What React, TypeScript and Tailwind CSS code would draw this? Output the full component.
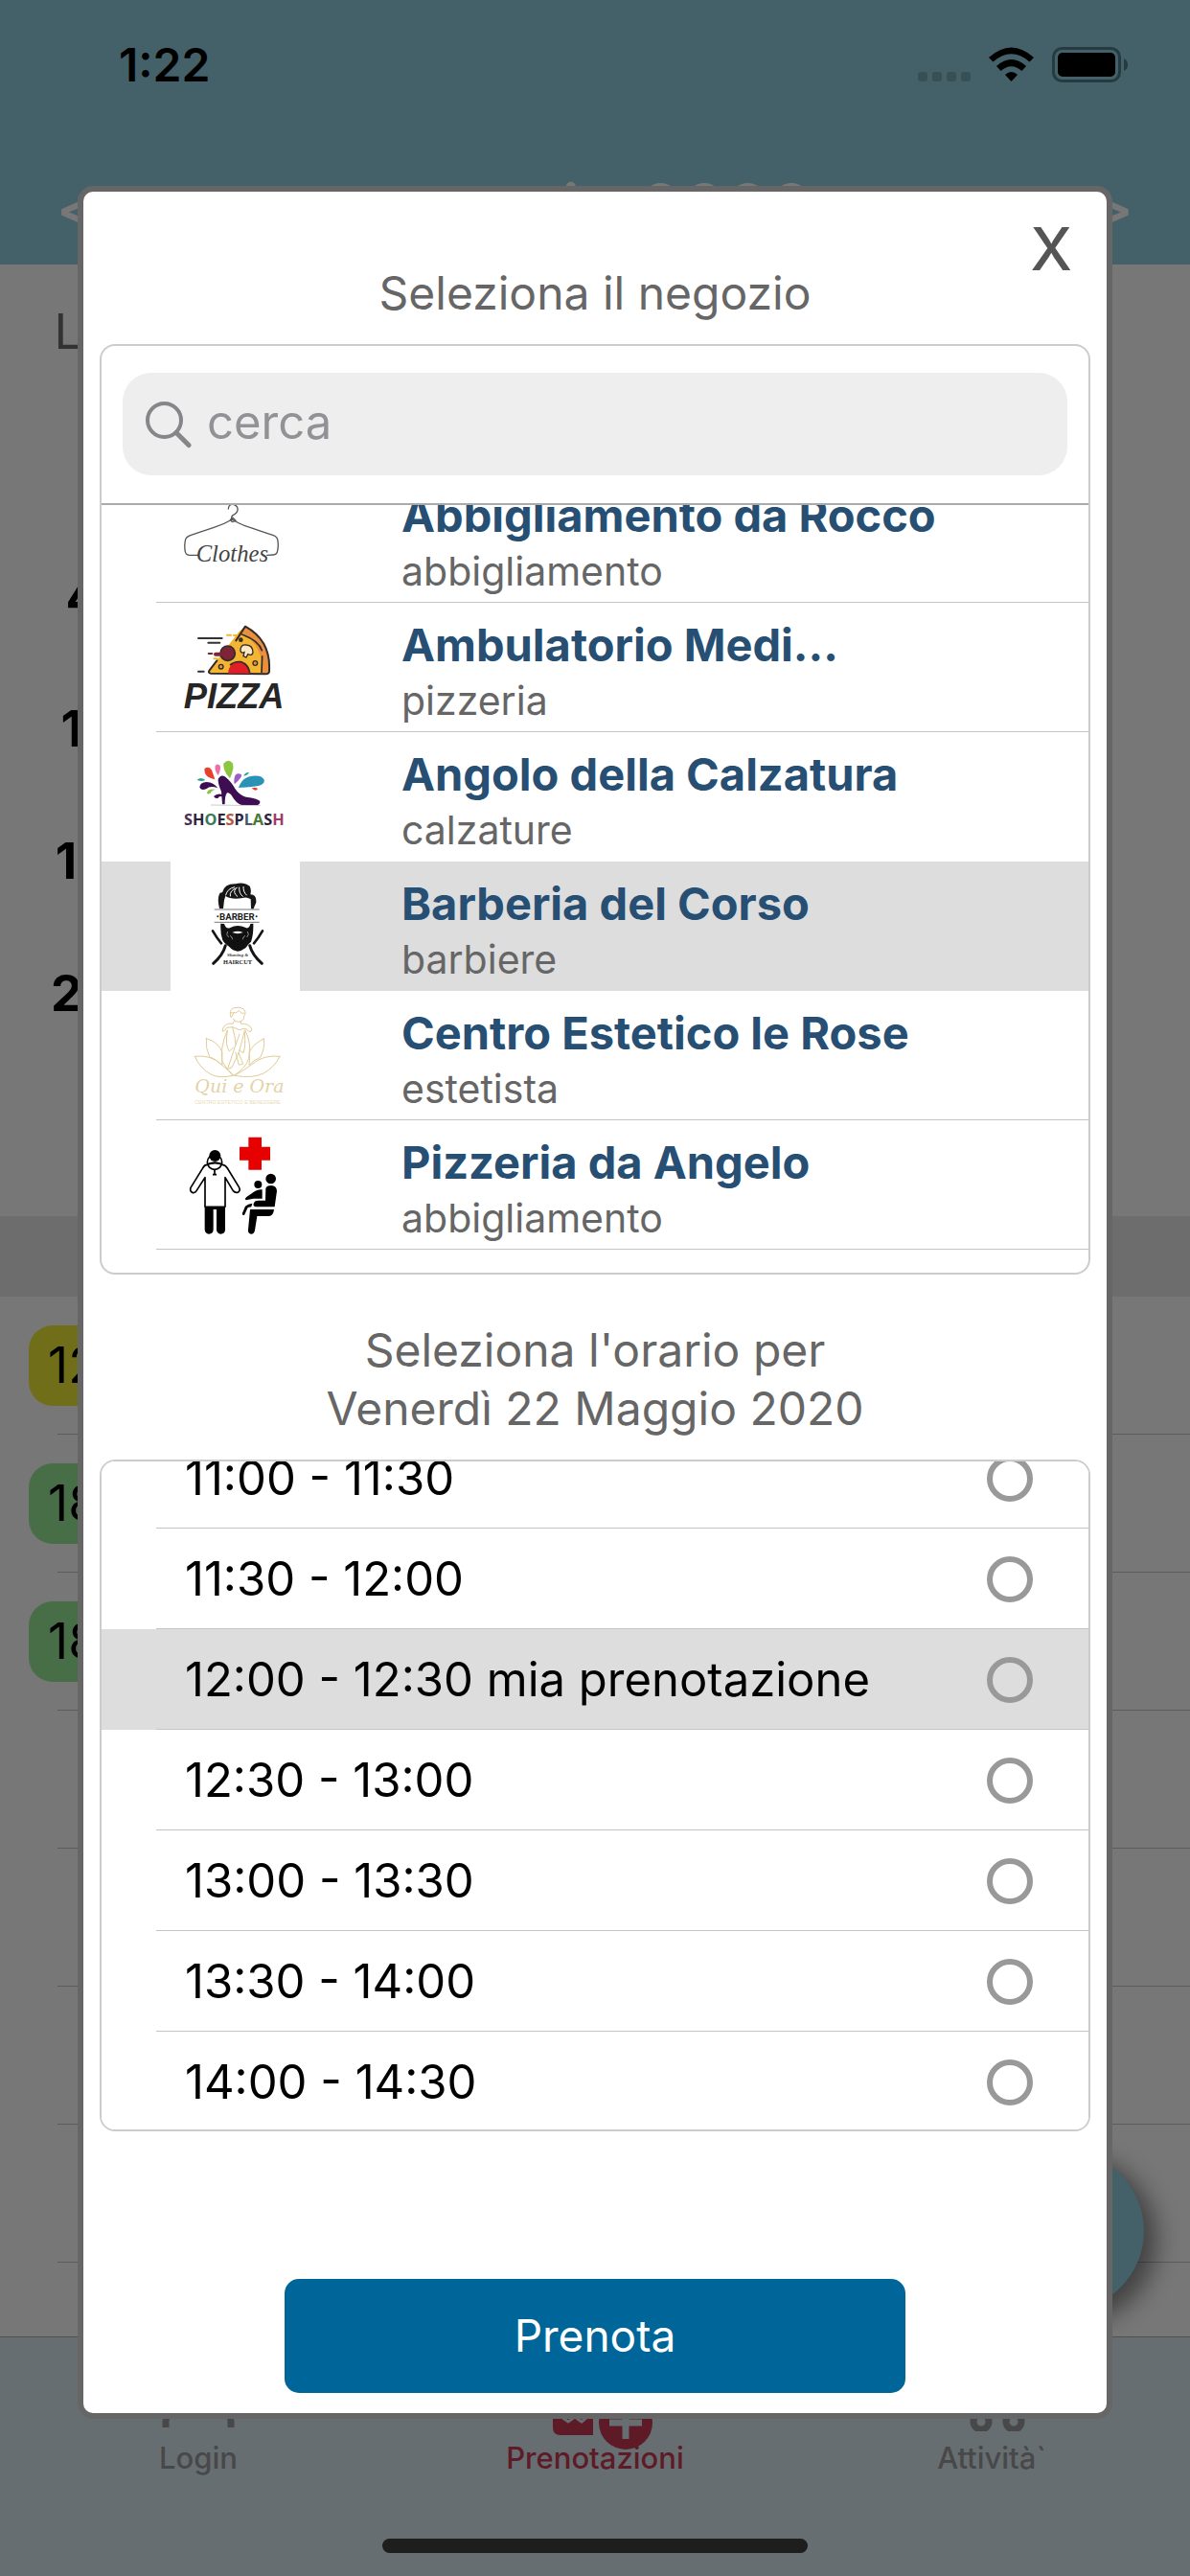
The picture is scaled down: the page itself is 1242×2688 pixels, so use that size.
import { useLayoutEffect, useRef, useState } from "react";
import type { ReactNode } from "react";

function StatusIcons() {
  return (
    <svg viewBox="0 0 220 40" className="h-10 w-[220px]" aria-hidden="true">
      <g fill="#384f56">
        <rect x="0" y="27" width="10" height="10" rx="3" />
        <rect x="15" y="27" width="10" height="10" rx="3" />
        <rect x="30" y="27" width="10" height="10" rx="3" />
        <rect x="45" y="27" width="10" height="10" rx="3" />
      </g>
      <path d="M74 12Q97.500 -9 121 12L116.500 16.500Q97.500 0 78.500 16.500Z" fill="#000" />
      <path d="M82 21Q97.500 7 113 21L108.500 26Q97.500 16.500 86.500 26Z" fill="#000" />
      <path d="M91 30Q97.500 24 104 30L97.500 37Z" fill="#000" />
      <rect x="141.500" y="2.500" width="69" height="34" rx="9" fill="none" stroke="#263a41" strokeWidth="3" />
      <rect x="146" y="7" width="60" height="25" rx="5" fill="#000" />
      <path d="M215 13Q219 15 219 19.500T215 26Z" fill="#263a41" />
    </svg>
  );
}

function ClothesLogo() {
  return (
    <svg viewBox="54 -18 405 405" className="h-full w-full" aria-hidden="true">
      <g fill="none" stroke="#555" strokeWidth="4" strokeLinecap="round" strokeLinejoin="round">
        <path d="M235 93Q236 78 250 79Q266 83 264 97Q262 107 250 112Q242 117 247 126" />
        <path d="M247 126Q220 142 190 151Q150 164 116 176Q102 181 100 192Q97 207 99 222Q100 237 113 238L140 238" />
        <path d="M247 126Q275 144 305 152Q345 166 376 176Q389 180 390 194Q392 210 389 224Q387 237 375 237L356 238" />
        <path d="M241 127L249 121L258 130L247 134Z" />
      </g>
      <text x="134" y="257" fontSize="74" fontStyle="italic" fontFamily="'Liberation Serif', serif" fill="#444">
        Clothes
      </text>
    </svg>
  );
}

function PizzaLogo() {
  return (
    <svg viewBox="54 387 405 405" className="h-full w-full" aria-hidden="true">
      <path d="M288 461Q366 505 364 606Q360 611 348 610L176 608Q170 604 176 596L268 478Z" fill="#f2b632" />
      <path d="M288 461Q366 505 364 606Q358 611 342 609Q346 520 274 480Z" fill="#e98f3e" />
      <path d="M340 536Q330 505 277 486" fill="none" stroke="#332b2a" strokeWidth="5" strokeLinecap="round" />
      <path d="M341 553L339 606" fill="none" stroke="#332b2a" strokeWidth="5" />
      <path
        d="M199 568L176 598Q170 607 180 608L350 610Q364 611 363 598Q368 505 288 461L259 505"
        fill="none"
        stroke="#332b2a"
        strokeWidth="6"
        strokeLinejoin="round"
        strokeLinecap="round"
      />
      <path d="M234 608Q238 572 268 572Q298 574 302 608Z" fill="#e21f26" />
      <path d="M240 582Q256 569 274 572Q298 579 302 606" fill="none" stroke="#332b2a" strokeWidth="5" />
      <circle cx="233" cy="545" r="23" fill="#7d2438" stroke="#332b2a" strokeWidth="5" />
      <path d="M195 548H216" stroke="#7d2438" strokeWidth="12" strokeLinecap="round" />
      <path
        d="M273 537Q272 517 291 519Q312 520 312 543Q309 554 296 548L291 558L282 554L285 542Q275 546 273 537Z"
        fill="#fbe9c6"
        stroke="#332b2a"
        strokeWidth="4"
      />
      <circle cx="274" cy="503" r="7" fill="#332b2a" />
      <circle cx="212" cy="587" r="7" fill="#e98f3e" stroke="#332b2a" strokeWidth="4" />
      <circle cx="319" cy="576" r="7" fill="#e98f3e" stroke="#332b2a" strokeWidth="4" />
      <g strokeWidth="6" strokeLinecap="round">
        <path d="M141 498H215M172 512H208M141 602H158" stroke="#333" />
        <path d="M173 546H184" stroke="#7d2438" />
        <path d="M231 488H243M252 489H262M190 562H200" stroke="#f2b632" />
      </g>
      <text
        x="95"
        y="716"
        fontSize="109"
        fontWeight="700"
        fontStyle="italic"
        fontFamily="'Liberation Sans', sans-serif"
        fill="#262626"
      >
        PIZZA
      </text>
    </svg>
  );
}

function ShoeLogo() {
  return (
    <svg viewBox="54 792 405 405" className="h-full w-full" aria-hidden="true">
      <path d="M161 905Q176 897 183 911Q188 924 193 940Q174 936 166 927Q158 915 161 905Z" fill="#e8402c" />
      <path d="M194 897Q201 888 209 897Q213 907 203 927Q191 912 194 897Z" fill="#ec6fa8" />
      <path d="M220 890Q236 872 249 890Q254 905 240 937Q217 912 220 890Z" fill="#8cc53f" />
      <path d="M257 926Q266 918 276 925Q279 934 254 955Q251 938 257 926Z" fill="#9a5fc0" />
      <path d="M267 966Q280 931 310 929Q340 925 347 941Q350 954 330 960Q305 964 267 966Z" fill="#2a93b5" />
      <path d="M283 929Q288 916 300 918Q296 927 283 929Z" fill="#27a59a" />
      <path d="M308 967Q324 962 327 970Q320 980 308 967Z" fill="#e8402c" />
      <path d="M137 941Q149 931 163 942Q149 949 137 941Z" fill="#27a59a" />
      <path d="M145 965Q146 949 167 948Q189 949 202 967Q178 958 167 969Q151 977 145 965Z" fill="#3d0f52" />
      <path d="M168 984Q168 969 194 971Q181 975 179 983Q173 987 168 984Z" fill="#8cc53f" />
      <path d="M189 993Q201 981 218 988L217 994Q205 990 203 998Q194 1001 189 993Z" fill="#3d0f52" />
      <path
        d="M203 939Q211 922 226 932Q246 949 256 969Q271 991 291 995Q326 999 334 1008Q335 1021 321 1021L276 1020Q259 1014 247 993Q239 980 231 982Q224 990 224 1018L216 1018L213 978Q202 954 203 939Z"
        fill="#3d0f52"
      />
      <path d="M180 1020L335 1022" stroke="#ccc" strokeWidth="3" />
      <text x="96" y="1082" fontSize="49" fontWeight="700" fontFamily="'Noto Sans', sans-serif">
        <tspan fill="#4a2f57">S</tspan>
        <tspan fill="#2b2440">H</tspan>
        <tspan fill="#3a7a5a">O</tspan>
        <tspan fill="#2b2440">E</tspan>
        <tspan fill="#b5583f">S</tspan>
        <tspan fill="#2b2440">P</tspan>
        <tspan fill="#3d5a72">L</tspan>
        <tspan fill="#4c7a3a">A</tspan>
        <tspan fill="#2b2440">S</tspan>
        <tspan fill="#a13a68">H</tspan>
      </text>
    </svg>
  );
}

function BarberLogo() {
  return (
    <svg viewBox="54 57 405 405" className="h-full w-full" aria-hidden="true">
      <path
        d="M216 154Q222 126 258 127Q282 120 302 134Q308 146 304 160Q324 160 322 185L313 206L306 204L305 175Q292 166 280 171Q245 177 226 165L222 178L219 204L207 204Q200 176 206 161Q208 153 216 154Z"
        fill="#161616"
      />
      <g fill="none" stroke="#fff" strokeWidth="3" strokeLinecap="round">
        <path d="M227 162Q231 142 254 137" />
        <path d="M241 165Q237 148 262 139" />
        <path d="M263 166Q248 154 257 143" />
        <path d="M280 166Q268 158 269 138" />
        <path d="M292 162Q281 152 282 136" />
      </g>
      <path d="M191 207H332M191 247H332" stroke="#777" strokeWidth="3" />
      <circle cx="202" cy="229" r="3" fill="#222" />
      <circle cx="323" cy="229" r="3" fill="#222" />
      <text
        x="262"
        y="241"
        fontSize="29"
        fontWeight="700"
        textAnchor="middle"
        fontFamily="Roboto, sans-serif"
        fill="#1c1c1c"
      >
        BARBER
      </text>
      <path
        d="M211 251L222 252Q228 270 241 264Q264 252 289 264Q300 269 304 252L313 251Q314 286 306 308Q297 315 290 326Q279 336 264 338Q248 336 238 324Q221 312 217 303Q209 280 211 251Z"
        fill="#111"
      />
      <path d="M247 279Q264 286 281 279Q264 271 247 279Z" fill="#fff" />
      <path
        d="M233 276Q226 286 236 294M295 276Q302 286 293 294M240 289Q248 293 248 301M288 289Q280 293 280 301"
        fill="none"
        stroke="#888"
        strokeWidth="3"
      />
      <g fill="none" stroke="#151515" strokeLinecap="round">
        <path d="M186 274Q200 298 213 313" strokeWidth="8" />
        <path d="M342 274Q328 298 315 313" strokeWidth="8" />
        <path d="M226 320Q218 350 188 376" strokeWidth="9" />
        <path d="M302 320Q310 350 340 376" strokeWidth="9" />
      </g>
      <text
        x="264"
        y="354"
        fontSize="15"
        fontWeight="700"
        fontStyle="italic"
        textAnchor="middle"
        fontFamily="'Liberation Serif', serif"
        fill="#333"
      >
        Shaving &amp;
      </text>
      <text
        x="264"
        y="377"
        fontSize="19"
        fontWeight="700"
        textAnchor="middle"
        fontFamily="'Liberation Serif', serif"
        fill="#222"
      >
        HAIRCUT
      </text>
    </svg>
  );
}

function LotusLogo() {
  return (
    <svg viewBox="54 462 405 405" className="h-full w-full" aria-hidden="true">
      <g fill="none" stroke="#e0cc98" strokeWidth="3" strokeLinecap="round" strokeLinejoin="round">
        <path d="M130 667Q180 660 215 694Q235 710 250 727Q205 737 180 723Q145 703 130 667Z" />
        <path d="M396 667Q345 660 306 694Q282 712 254 727Q310 737 345 720Q380 701 396 667Z" />
        <path d="M166 611Q205 622 216 655Q214 680 216 694Q190 672 176 669Q163 641 166 611Z" />
        <path d="M346 612Q312 628 300 654Q303 670 300 694Q318 676 335 670Q351 641 346 612Z" />
        <path d="M232 585Q208 640 216 683Q231 711 252 727Q289 705 299 673Q309 630 288 585" />
        <path d="M243 545Q236 522 250 516Q268 510 282 518Q293 528 284 541Q285 557 266 559Q252 558 250 549M243 530Q258 534 268 524Q276 536 284 532M245 543L253 529" />
        <path d="M253 557L249 565Q220 560 216 588Q225 590 230 577L248 575L270 584Q292 575 298 588Q309 593 308 581Q300 563 275 565L273 556" />
        <path d="M248 576Q256 600 258 630L233 706L246 702L269 652L286 586M232 587Q224 632 238 651L250 640M258 630L270 598M286 592Q290 635 282 656L270 648M258 655L268 694L281 690L267 655" />
      </g>
      <text x="130" y="781" fontSize="57" fontStyle="italic" fontFamily="'DejaVu Serif', serif" fill="#e3d3a6">
        Qui e Ora
      </text>
      <text x="264" y="816" fontSize="16" textAnchor="middle" fontFamily="'Liberation Sans', sans-serif" fill="#e8dcba">
        CENTRO ESTETICO E BENESSERE
      </text>
    </svg>
  );
}

function DoctorLogo() {
  return (
    <svg viewBox="54 867 405 405" className="h-full w-full" aria-hidden="true">
      <path d="M298 920H339V950H366V992H339V1022H298V992H270V950H298Z" fill="#e60000" />
      <circle cx="193" cy="978" r="18" fill="#000" />
      <path
        d="M168 1006Q160 1006 154 1018L117 1078Q113 1090 124 1094Q131 1095 135 1088L162 1046V1138H225V1046L250 1088Q257 1096 266 1092Q274 1086 268 1076L232 1017Q226 1007 217 1006Q206 1001 193 1001Q179 1001 168 1006Z"
        fill="#fff"
        stroke="#000"
        strokeWidth="5"
        strokeLinejoin="round"
      />
      <circle cx="192" cy="998" r="23" fill="none" stroke="#000" strokeWidth="5" />
      <path d="M171 1004Q193 994 214 1004M192 1021V1035M186 1037H198" fill="none" stroke="#000" strokeWidth="5" />
      <path
        d="M161 1138H225V1210Q224 1223 211 1223Q199 1222 198 1210V1146H188V1210Q187 1223 174 1223Q162 1222 161 1210Z"
        fill="#000"
      />
      <circle cx="368" cy="1050" r="16" fill="#000" />
      <circle cx="328" cy="1068" r="12" fill="#000" />
      <path
        d="M352 1080Q355 1071 369 1071Q386 1072 387 1088L380 1138H320Q312 1136 314 1128Q316 1118 330 1118H351Z"
        fill="#000"
      />
      <path d="M341 1084V1112H314L290 1117Q285 1113 292 1107L318 1089Q330 1082 341 1084Z" fill="#000" />
      <path d="M310 1127L307 1138L296 1140L285 1164Q277 1166 279 1157L288 1136Q296 1129 310 1127Z" fill="#000" />
      <path d="M303 1146H378Q376 1166 362 1167H325L318 1211Q316 1223 306 1223Q296 1221 297 1210Z" fill="#000" />
    </svg>
  );
}

type Shop = { name: string; kind: string; logo: ReactNode };

const shops: Shop[] = [
  { name: "Abbigliamento da Rocco", kind: "abbigliamento", logo: <ClothesLogo /> },
  { name: "Ambulatorio Medi...", kind: "pizzeria", logo: <PizzaLogo /> },
  { name: "Angolo della Calzatura", kind: "calzature", logo: <ShoeLogo /> },
  { name: "Barberia del Corso", kind: "barbiere", logo: <BarberLogo /> },
  { name: "Centro Estetico le Rose", kind: "estetista", logo: <LotusLogo /> },
  { name: "Pizzeria da Angelo", kind: "abbigliamento", logo: <DoctorLogo /> },
];

const slots = [
  "11:00 - 11:30",
  "11:30 - 12:00",
  "12:00 - 12:30 mia prenotazione",
  "12:30 - 13:00",
  "13:00 - 13:30",
  "13:30 - 14:00",
  "14:00 - 14:30",
];

const mondays = ["4", "11", "18", "25"];

const bookings = [
  { time: "12", tone: "bg-[#716e19]" },
  { time: "18", tone: "bg-[#486e48]" },
  { time: "18", tone: "bg-[#486e48]" },
  null,
  null,
  null,
  null,
  null,
];

function CalendarPage() {
  return (
    <div className="flex h-screen flex-col overflow-hidden">
      <header className="flex h-[276px] shrink-0 flex-col bg-[#446068]">
        <div className="flex items-center justify-between pt-12 pr-16 pl-[124px]">
          <span className="text-[48px] leading-10 font-semibold">1:22</span>
          <StatusIcons />
        </div>
        <div className="flex flex-1 items-center justify-between px-[60px] pt-[72px] text-[#777]">
          <button type="button" aria-label="Mese precedente" className="text-[51px] font-bold">
            &lt;
          </button>
          <h1 className="text-[72px] leading-none font-medium">maggio 2020</h1>
          <button type="button" aria-label="Mese successivo" className="text-[51px] font-bold">
            &gt;
          </button>
        </div>
      </header>

      <section className="h-[993px] shrink-0 pt-9">
        <div className="w-[172px] text-center">
          <p className="text-[51px] leading-[68px] text-[#333]">Lu</p>
          <ol className="pt-[174px] text-[52px] leading-[138px] font-bold">
            {mondays.map((d) => (
              <li key={d}>{d}</li>
            ))}
          </ol>
        </div>
      </section>

      <div className="h-[84px] shrink-0 bg-[#6d6d6d]" />

      <ul className="min-h-0 flex-1 overflow-hidden">
        {bookings.map((b, i) => (
          <li key={i} className="flex h-36 items-center pl-[30px]">
            <div className="relative flex h-full w-full items-center">
              {b && (
                <span className={`flex h-[84px] w-48 items-center rounded-[25px] pl-5 text-[52px] ${b.tone}`}>
                  {b.time}
                </span>
              )}
              <span className="absolute right-0 bottom-0 left-[30px] h-px bg-[#5c5c5c]" />
            </div>
          </li>
        ))}
      </ul>

      <nav className="relative flex h-[250px] shrink-0 flex-col justify-between border-t border-[#505050] bg-[#666e71] pb-6">
        <div className="grid grid-cols-3 pt-[26px] text-center text-[31px] leading-10 font-medium text-[#484848]">
          <a href="#login" className="flex flex-col items-center gap-2">
            <svg viewBox="0 0 80 72" className="h-[72px] w-20" aria-hidden="true">
              <circle cx="40" cy="22" r="16" fill="none" stroke="#484848" strokeWidth="7" />
              <path d="M6 68V62Q6 46 40 46T74 62V68" fill="none" stroke="#484848" strokeWidth="7" />
            </svg>
            Login
          </a>
          <a href="#prenotazioni" className="flex flex-col items-center gap-2 text-[#5e1a26]">
            <svg viewBox="0 0 108 72" className="h-[72px] w-[108px] overflow-visible" aria-hidden="true">
              <path d="M10 8H52V76H18Q10 76 10 68Z" fill="#5e1a26" />
              <path d="M19 57L26 62L33 57L40 62L46 57" stroke="#666e71" strokeWidth="3" fill="none" />
              <circle cx="86" cy="63" r="28" fill="#5e1a26" />
              <path d="M86 46V80M69 63H103" stroke="#666e71" strokeWidth="7" />
            </svg>
            Prenotazioni
          </a>
          <a href="#attivita" className="flex flex-col items-center gap-2">
            <svg viewBox="0 0 80 72" className="h-[72px] w-20" aria-hidden="true">
              <path d="M4 8H16L24 46H66L74 18H18" fill="none" stroke="#484848" strokeWidth="6" />
              <circle cx="29" cy="62" r="8" fill="none" stroke="#484848" strokeWidth="7" />
              <circle cx="63" cy="62" r="8" fill="none" stroke="#484848" strokeWidth="7" />
            </svg>
            Attività`
          </a>
        </div>
        <div className="mx-auto h-[15px] w-[444px] rounded-full bg-[#1e1e1e]" />
        <button
          type="button"
          aria-label="Aggiungi"
          className="absolute -top-[194px] right-12 size-[166px] rounded-full bg-[#446068] shadow-[9px_9px_24px_4px_rgba(0,0,0,0.45)]"
        />
      </nav>
    </div>
  );
}

function BookingDialog() {
  const [shop, setShop] = useState(3);
  const [slot, setSlot] = useState(2);
  const shopList = useRef<HTMLUListElement>(null);
  const slotList = useRef<HTMLDivElement>(null);

  useLayoutEffect(() => {
    if (shopList.current) shopList.current.scrollTop = 33;
    if (slotList.current) slotList.current.scrollTop = 35;
  }, []);

  return (
    <div className="absolute inset-0 flex px-[81px] pt-[194px] pb-[164px]">
      <div
        role="dialog"
        aria-label="Nuova prenotazione"
        className="relative flex flex-1 flex-col rounded-2xl border-6 border-[#666] bg-white px-[17px] pt-[75px] pb-[21px]"
      >
        <button
          type="button"
          aria-label="Chiudi"
          className="absolute top-6 right-9 text-[62px] leading-[72px] font-medium text-[#555]"
        >
          X
        </button>
        <h2 className="text-center text-[48px] leading-[61px] text-[#666]">Seleziona il negozio</h2>

        <div className="mt-[23px] flex h-[971px] shrink-0 flex-col overflow-hidden rounded-2xl border-2 border-[#ccc]">
          <div className="border-b-2 border-[#aaa] px-[22px] pt-7 pb-[29px]">
            <label className="flex h-[107px] items-center rounded-[30px] bg-[#eee] pl-6">
              <svg viewBox="0 0 48 50" className="h-[50px] w-12 shrink-0" aria-hidden="true">
                <circle cx="19.500" cy="20.500" r="17.500" fill="none" stroke="#85858a" strokeWidth="4" />
                <path d="M32 33.500L45 46.500" stroke="#85858a" strokeWidth="5" strokeLinecap="round" />
              </svg>
              <input
                type="text"
                placeholder="cerca"
                aria-label="cerca"
                className="min-w-0 flex-1 bg-transparent pb-1 pl-4 text-[49px] leading-none outline-none placeholder:text-[#929296]"
              />
            </label>
          </div>
          <ul ref={shopList} className="min-h-0 flex-1 overflow-y-auto pb-6 [scrollbar-width:none]">
            {shops.map((s, i) => (
              <li key={s.name}>
                <button
                  type="button"
                  onClick={() => setShop(i)}
                  className={`relative flex h-[135px] w-full text-left ${i === shop ? "bg-[#ddd]" : "bg-white"}`}
                >
                  <span className="ml-[72px] size-[135px] shrink-0 bg-white">{s.logo}</span>
                  <span className="ml-[106px] flex flex-col pt-[14px]">
                    <span className="text-[47px] leading-[60px] font-bold text-[#264f73]">{s.name}</span>
                    <span className="text-[41px] leading-[56px] text-[#666]">{s.kind}</span>
                  </span>
                  {i !== shop && i + 1 !== shop && (
                    <span className="absolute right-0 bottom-0 left-[57px] h-px bg-[#c4c4c4]" />
                  )}
                </button>
              </li>
            ))}
          </ul>
        </div>

        <h2 className="mt-12 text-center text-[48px] leading-[61px] text-[#666]">
          Seleziona l&apos;orario per
          <br />
          Venerdì 22 Maggio 2020
        </h2>

        <div className="mt-[23px] h-[701px] shrink-0 overflow-hidden rounded-2xl border-2 border-[#ccc]">
          <div
            ref={slotList}
            role="radiogroup"
            aria-label="Orario"
            className="h-full overflow-y-auto [scrollbar-width:none]"
          >
            {slots.map((s, i) => (
              <label
                key={s}
                onClick={() => setSlot(i)}
                className={`relative flex h-[105px] items-center justify-between pr-[58px] pl-[87px] text-[49px] ${
                  i === slot ? "bg-[#ddd]" : "bg-white"
                }`}
              >
                {s}
                <input
                  type="radio"
                  name="orario"
                  value={s}
                  className="size-12 appearance-none rounded-full border-6 border-[#999]"
                />
                <span className="absolute right-0 bottom-0 left-[57px] h-px bg-[#c4c4c4]" />
              </label>
            ))}
          </div>
        </div>

        <button
          type="button"
          className="mx-auto mt-auto h-[119px] w-[648px] rounded-[15px] bg-[#069] text-[46px] text-white"
        >
          Prenota
        </button>
      </div>
    </div>
  );
}

export default function App() {
  return (
    <main className="relative min-h-screen bg-[#777] font-['Inter','Liberation_Sans',sans-serif] text-black">
      <CalendarPage />
      <BookingDialog />
    </main>
  );
}
